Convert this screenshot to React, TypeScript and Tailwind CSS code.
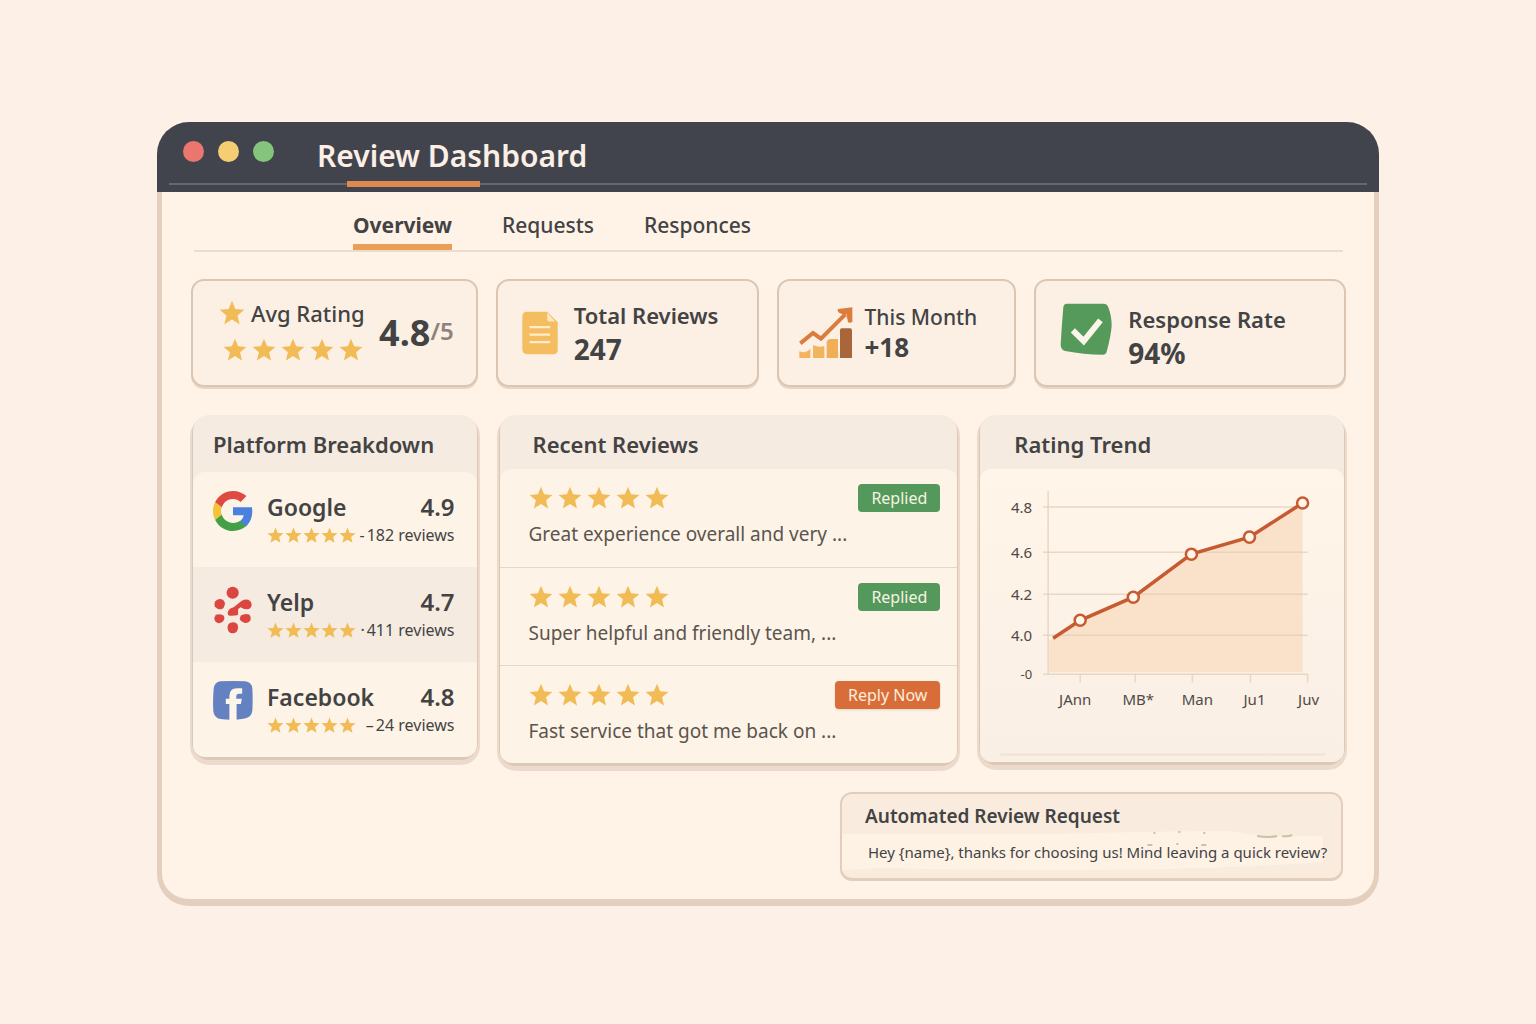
import type { ReactNode } from "react";

const STAR = "M12 0.8l3.1 7.5 8.3.6-6.3 5.3 1.9 8.2L12 18.1 4.9 22.4l2-8.2L.6 8.9l8.3-.6z";

function Star({ className }: { className: string }) {
  return (
    <svg viewBox="0 0 24 24" className={className} aria-hidden="true">
      <path d={STAR} fill="#f1bb55" />
    </svg>
  );
}

function Stars({ size, className = "" }: { size: "sm" | "md"; className?: string }) {
  const star = size === "sm" ? "size-[17px]" : "size-6";
  const gap = size === "sm" ? "gap-px" : "gap-[5px]";
  return (
    <div className={`flex shrink-0 ${gap} ${className}`} role="img" aria-label="5 stars">
      {[0, 1, 2, 3, 4].map((i) => (
        <Star key={i} className={star} />
      ))}
    </div>
  );
}

function DocumentIcon() {
  return (
    <svg viewBox="110 122 110 132" className="h-11 w-9 shrink-0" aria-hidden="true">
      <path
        d="M126 123h61l32 32v85q0 13-13 13h-80q-15 0-15-15v-100q0-15 15-15z"
        fill="#f3bd60"
      />
      <path d="M187 125l24 28h-18q-6 0-6-6z" fill="#fbe6c4" />
      <path d="M133 170h63M133 193h63M133 216h63" stroke="#fdeccd" strokeWidth="7" />
    </svg>
  );
}

function GrowthIcon() {
  return (
    <svg viewBox="84 112 162 154" className="h-[52px] w-[54px] shrink-0" aria-hidden="true">
      <path d="M85 244q18 8 33-8v28H85z" fill="#f2b45c" />
      <path d="M126 225q17 8 34 3v36h-34z" fill="#f2b45c" />
      <path d="M167 217q2-10 14-10h20v57h-34z" fill="#f0ae58" />
      <path d="M207 180q0-5 5-5h25q6 0 6 6v83h-36z" fill="#a9663a" />
      <path d="M88 220l38-31 24 17 72-72" fill="none" stroke="#db7b3c" strokeWidth="12" />
      <path d="M199 120q2-4 8-4l37-4v44q-7 4-13 1l-3-17-14-8q-12-2-15-12z" fill="#db7b3c" />
      <path d="M226 131v14" stroke="#f3b98c" strokeWidth="3" />
    </svg>
  );
}

function CheckIcon() {
  return (
    <svg viewBox="100 98 158 158" className="size-[52px] shrink-0" aria-hidden="true">
      <path
        d="M121 100h112q9 0 13 9 11 28 11 58-2 30-15 78-3 10-12 10-58 0-114-11-14-4-14-20 3-54 8-112 1-12 11-12z"
        fill="#559a5b"
      />
      <path d="M139 181l33 33 51-63" fill="none" stroke="#fbf6e9" strokeWidth="18" />
    </svg>
  );
}

function GoogleLogo() {
  return (
    <svg viewBox="1 1 22 22" className="size-10" aria-hidden="true">
      <path
        d="M22.6 12.2c0-.8-.1-1.500-.2-2.200H12v4.300h5.900c-.3 1.400-1 2.500-2.200 3.300v2.800h3.600c2.100-1.900 3.300-4.700 3.300-8.200z"
        fill="#4a80de"
      />
      <path
        d="M12 23c3 0 5.500-1 7.300-2.700l-3.600-2.800c-1 .7-2.200 1.100-3.700 1.100-2.900 0-5.300-1.900-6.200-4.500H2.200v2.800C4 20.500 7.700 23 12 23z"
        fill="#43a047"
      />
      <path
        d="M5.800 14.100c-.2-.7-.4-1.400-.4-2.100s.1-1.400.4-2.100V7.100H2.200C1.400 8.500 1 10.200 1 12s.4 3.500 1.200 4.900l3.600-2.800z"
        fill="#f5c23c"
      />
      <path
        d="M12 5.400c1.600 0 3.100.6 4.200 1.600l3.200-3.200C17.500 2.100 15 1 12 1 7.700 1 4 3.500 2.200 7.100l3.700 2.800c.8-2.600 3.200-4.500 6.100-4.500z"
        fill="#de4b42"
      />
    </svg>
  );
}

function YelpLogo() {
  return (
    <svg viewBox="104 46 118 142" className="h-12 w-10" aria-hidden="true">
      <g fill="#db4740">
        <circle cx="162" cy="66" r="18" />
        <path d="M110 92q7-10 19-7 11 4 10 16-2 11-10 14-14 1-20-9-2-8 1-14z" />
        <path d="M187 91q10-8 21-4 11 6 10 16-2 12-14 12-10 0-19-6l-7 6v17q-12 3-25 2-8-3-5-12 4-10 17-13z" />
        <path d="M112 131q12-4 23 2 6 9-2 18-8 7-17 4-9-5-8-15z" />
        <path d="M186 133q12-7 25-3 7 8 3 18-7 10-18 7-13-6-13-13z" />
        <path d="M162 153q16 0 16 15-1 18-16 18t-15-18q0-14 15-15z" />
      </g>
    </svg>
  );
}

function FacebookLogo() {
  return (
    <svg viewBox="103 323 122 122" className="size-10" aria-hidden="true">
      <path
        d="M125 324q38-2 76 0 20 2 22 22 2 35 0 68-3 21-23 23-35 7-74 2-20-4-22-24-2-34 1-68 2-20 20-23z"
        fill="#6481c2"
      />
      <path
        d="M153 445v-52h-11v-16h11v-9q0-23 23-23h16v17h-10q-8 0-8 8v7h17l-3 16h-13v52z"
        fill="#fdf4ea"
      />
    </svg>
  );
}

function StatCard({ children, className = "" }: { children: ReactNode; className?: string }) {
  return (
    <section
      className={`flex h-[108px] rounded-[13px] border-2 border-[#dbc6b3] bg-[#fcf0e4] shadow-[0_2px_0_#e6d5c5] ${className}`}
    >
      {children}
    </section>
  );
}

function Panel({ title, head, children }: { title: string; head: string; children: ReactNode }) {
  return (
    <section className="rounded-2xl bg-[#f6ebe1] shadow-[0_2px_0_1px_#dcc8b6,0_5px_0_3px_#ecdbcd]">
      <h2 className={`pt-3 text-[22px] leading-[34px] font-semibold ${head}`}>{title}</h2>
      <div className="overflow-hidden rounded-xl bg-[#fef3e7]">{children}</div>
    </section>
  );
}

const platforms = [
  { name: "Google", rating: "4.9", sep: "-", reviews: "182 reviews", Logo: GoogleLogo, tone: "" },
  { name: "Yelp", rating: "4.7", sep: "·", reviews: "411 reviews", Logo: YelpLogo, tone: "bg-[#f5ebe0]" },
  { name: "Facebook", rating: "4.8", sep: "–", reviews: "24 reviews", Logo: FacebookLogo, tone: "" },
];

const reviews = [
  { text: "Great experience overall and very ...", replied: true },
  { text: "Super helpful and friendly team, ...", replied: true },
  { text: "Fast service that got me back on ...", replied: false },
];

const yTicks = [
  { label: "4.8", y: 40 },
  { label: "4.6", y: 85 },
  { label: "4.2", y: 127 },
  { label: "4.0", y: 168 },
];

const xTicks = [
  { label: "JAnn", x: 100, text: 95 },
  { label: "MB*", x: 155, text: 158 },
  { label: "Man", x: 212, text: 217 },
  { label: "Ju1", x: 270, text: 274 },
  { label: "Juv", x: 327, text: 328 },
];

const points = [
  [100, 153],
  [153, 130],
  [211, 87],
  [269, 70],
  [322, 36],
];

function TrendChart() {
  const line = "M73 171 " + points.map(([x, y]) => `L${x} ${y}`).join(" ");
  return (
    <svg viewBox="0 2 363 292" className="block w-full" role="img" aria-label="Rating trend">
      <defs>
        <linearGradient id="trendBg" x1="0" y1="0" x2="0" y2="1">
          <stop offset="0%" stopColor="#fff5e8" />
          <stop offset="100%" stopColor="#f9efe5" />
        </linearGradient>
      </defs>
      <rect width="363" height="294" fill="url(#trendBg)" />
      <path d={`${line} V205 H69 V174 Z`} fill="#f9e2c9" />
      <g stroke="#e3cdb9" strokeOpacity="0.75" strokeWidth="1.500">
        {yTicks.map((t) => (
          <path key={t.label} d={`M63 ${t.y}H327`} />
        ))}
        <path d="M68 24V207M63 207H327" fill="none" />
        {xTicks.map((t) => (
          <path key={t.label} d={`M${t.x} 207V215`} />
        ))}
      </g>
      <path d={line} fill="none" stroke="#c75a31" strokeWidth="3.500" />
      {points.map(([x, y]) => (
        <circle key={x} cx={x} cy={y} r="5.500" fill="#fff6ea" stroke="#c75a31" strokeWidth="2.500" />
      ))}
      <g fill="#4f4a46" fontSize="15">
        {yTicks.map((t) => (
          <text key={t.label} x="52" y={t.y + 6} textAnchor="end">
            {t.label}
          </text>
        ))}
        <text x="52" y="212" textAnchor="end" fontSize="13">
          -0
        </text>
        {xTicks.map((t) => (
          <text key={t.label} x={t.text} y="238" textAnchor="middle">
            {t.label}
          </text>
        ))}
      </g>
      <path d="M20 287H345" stroke="#efe2d6" strokeWidth="2" />
    </svg>
  );
}

export default function App() {
  return (
    <div className="min-h-screen bg-[#fdf0e7] px-4 pt-[122px] pb-12 font-['Noto_Sans',sans-serif] text-[#434344]">
      <div className="mx-auto max-w-[1222px]">
        <header className="rounded-t-[32px] bg-[#42444d] px-3">
          <div className="flex h-[59px] items-center pl-[14px]">
            <div className="flex gap-[14px]">
              <span className="size-[21px] rounded-full bg-[#ea766d]" />
              <span className="size-[21px] rounded-full bg-[#f5cd73]" />
              <span className="size-[21px] rounded-full bg-[#85c47c]" />
            </div>
            <h1 className="pt-2 pl-[43px] text-[30px] leading-10 font-semibold text-[#fbefe6]">Review Dashboard</h1>
          </div>
          <div className="flex items-center pb-[5px]">
            <span className="h-0.5 w-[178px] bg-[#666871]" />
            <span className="h-1.5 w-[133px] bg-[#dd8a51]" />
            <span className="h-0.5 flex-1 bg-[#666871]" />
          </div>
        </header>

        <main className="flex flex-col rounded-b-[32px] border-x-[5px] border-b-[7px] border-[#e3cfbd] bg-[#fff3e8] pr-7 pb-[18px] pl-[29px]">
          <nav className="mx-[3px] flex h-[60px] items-stretch gap-[50px] border-b-2 border-[#eadccf] pl-[159px] text-[21px]">
            <a href="#overview" className="flex border-b-[6px] border-[#e99f56] pt-[17px] leading-8 font-bold">
              Overview
            </a>
            <a href="#requests" className="pt-[17px] leading-8 font-medium">
              Requests
            </a>
            <a href="#responces" className="pt-[17px] leading-8 font-medium">
              Responces
            </a>
          </nav>

          <div className="mt-[27px] grid grid-cols-[287fr_263fr_240fr_312fr] gap-[18px]">
            <StatCard className="justify-between pt-4 pr-[22px] pl-[26px]">
              <div>
                <div className="flex items-center gap-[6px]">
                  <Star className="size-[26px]" />
                  <h2 className="text-[22px] leading-8 font-medium">Avg Rating</h2>
                </div>
                <Stars size="md" className="mt-[9px] pl-1" />
              </div>
              <p className="flex items-start pt-4 text-4xl leading-10 font-bold">
                4.8<span className="text-2xl leading-9 font-semibold text-[#8d837c]">/5</span>
              </p>
            </StatCard>
            <StatCard className="items-center gap-4 pl-6">
              <DocumentIcon />
              <div>
                <h2 className="text-[22px] leading-8 font-semibold">Total Reviews</h2>
                <p className="text-[28px] leading-9 font-bold">247</p>
              </div>
            </StatCard>
            <StatCard className="items-center gap-3 pl-5">
              <GrowthIcon />
              <div>
                <h2 className="text-[21px] leading-7 font-medium">This Month</h2>
                <p className="text-[26px] leading-8 font-bold">+18</p>
              </div>
            </StatCard>
            <StatCard className="items-start gap-4 pt-[22px] pl-6">
              <CheckIcon />
              <div>
                <h2 className="text-[22px] leading-8 font-semibold">Response Rate</h2>
                <p className="text-[28px] leading-9 font-bold">94%</p>
              </div>
            </StatCard>
          </div>

          <div className="mt-7 grid grid-cols-[283fr_457fr_363fr] items-start gap-[23px] px-[2px]">
            <Panel title="Platform Breakdown" head="px-5 pb-[11px]">
              {platforms.map(({ name, rating, sep, reviews: count, Logo, tone }) => (
                <article key={name} className={`flex h-[95px] gap-[14px] pt-[19px] pr-[22px] pl-5 ${tone}`}>
                  <Logo />
                  <div className="flex-1">
                    <div className="flex justify-between text-2xl leading-8">
                      <h3 className="text-[23px] font-semibold">{name}</h3>
                      <span className="font-semibold">{rating}</span>
                    </div>
                    <div className="flex items-center justify-between text-base leading-6 whitespace-nowrap">
                      <Stars size="sm" />
                      <span className="flex gap-0.5">
                        <span>{sep}</span>
                        <span>{count}</span>
                      </span>
                    </div>
                  </div>
                </article>
              ))}
            </Panel>

            <Panel title="Recent Reviews" head="px-[33px] pb-2">
              {reviews.map((r, i) => (
                <article
                  key={r.text}
                  className={`h-[98px] pt-[15px] pr-[17px] pl-[29px] ${i > 0 ? "border-t border-[#e6d6c8]" : ""}`}
                >
                  <div className="flex items-center justify-between">
                    <Stars size="md" />
                    {r.replied ? (
                      <span className="rounded bg-[#55985c] px-[13px] text-base leading-7 text-[#f6f5e4]">Replied</span>
                    ) : (
                      <button
                        type="button"
                        className="rounded bg-[#d86d39] px-[13px] text-base leading-7 text-[#fdeedd] shadow-sm"
                      >
                        Reply Now
                      </button>
                    )}
                  </div>
                  <p className="mt-1.5 text-[19px] leading-8 text-[#5b554f]">{r.text}</p>
                </article>
              ))}
            </Panel>

            <Panel title="Rating Trend" head="px-[34px] pb-2">
              <TrendChart />
            </Panel>
          </div>

          <aside className="relative mt-[29px] mr-[3px] w-[503px] self-end overflow-hidden rounded-xl border-2 border-b-[3px] border-[#e3cebc] bg-[#f9ecde]">
            <svg
              viewBox="0 0 500 84"
              preserveAspectRatio="none"
              className="absolute inset-0 size-full"
              aria-hidden="true"
            >
              <path d="M0 40H220Q310 37 390 37L420 42H482V68Q320 80 40 74L0 76Z" fill="#fdf2e4" />
              <path
                d="M416 42q12 2 20 0M441 42q6 1 10-1M306 51h5M360 51h5M335 50h2M312 39h2M337 38h2M362 39h2"
                stroke="#c9c3a4"
                strokeWidth="2"
                fill="none"
              />
            </svg>
            <div className="relative pt-1 pb-2 pl-[23px]">
              <h2 className="text-[19px] leading-9 font-semibold">Automated Review Request</h2>
              <p className="pl-[3px] text-[15px] leading-9">
                Hey {"{name}"}, thanks for choosing us! Mind leaving a quick review?
              </p>
            </div>
          </aside>
        </main>
      </div>
    </div>
  );
}
